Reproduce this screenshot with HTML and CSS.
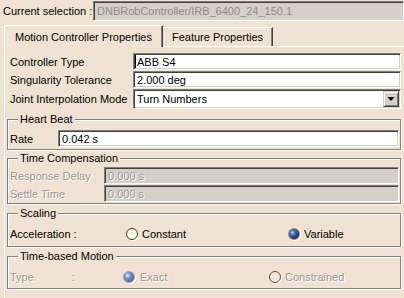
FILE: index.html
```html
<!DOCTYPE html>
<html lang="en">
<head>
	<meta charset="UTF-8">
	<title>Controller Properties</title>
	<link rel="stylesheet" href="styles.css">
</head>
<body>
	<div class="selection">
		<span class="selection-label">Current selection :</span>
		<div class="field field-readonly">DNBRobController/IRB_6400_24_150.1</div>
	</div>

	<div class="tabs">
		<div class="tab tab-active">Motion Controller Properties</div>
		<div class="tab tab-feature">Feature Properties</div>
	</div>

	<div class="panel">
		<div class="prop-row">
			<span class="prop-label">Controller Type</span>
			<div class="field"><span class="caret"></span>ABB S4</div>
		</div>
		<div class="prop-row">
			<span class="prop-label">Singularity Tolerance</span>
			<div class="field">2.000 deg</div>
		</div>
		<div class="prop-row prop-row-select">
			<span class="prop-label">Joint Interpolation Mode</span>
			<div class="field field-select">
				<span>Turn Numbers</span>
				<span class="drop-btn"><span class="arrow"></span></span>
			</div>
		</div>

		<!-- Heart Beat -->
		<div class="group group-heart">
			<div class="group-title">Heart Beat</div>
			<div class="field-row">
				<span class="rate-label">Rate</span>
				<div class="field">0.042 s</div>
			</div>
		</div>

		<!-- Time Compensation -->
		<div class="group group-time">
			<div class="group-title">Time Compensation</div>
			<div class="field-row field-row-first">
				<span class="comp-label is-muted">Response Delay</span>
				<div class="field field-disabled">0.000 s</div>
			</div>
			<div class="field-row field-row-next">
				<span class="comp-label is-muted">Settle Time</span>
				<div class="field field-disabled">0.000 s</div>
			</div>
		</div>

		<!-- Scaling -->
		<div class="group group-scaling">
			<div class="group-title">Scaling</div>
			<div class="radio-row">
				<span class="accel-label">Acceleration :</span>
				<span class="option option-constant"><span class="radio radio-off"></span>Constant</span>
				<span class="option"><span class="radio radio-on"></span>Variable</span>
			</div>
		</div>

		<!-- Time-based Motion -->
		<div class="group group-motion">
			<div class="group-title">Time-based Motion</div>
			<div class="radio-row">
				<span class="type-label is-muted">Type</span>
				<span class="type-colon is-muted">:</span>
				<span class="option option-exact is-muted"><span class="radio radio-on is-disabled"></span>Exact</span>
				<span class="option is-muted"><span class="radio radio-off is-disabled"></span>Constrained</span>
			</div>
		</div>
	</div>
</body>
</html>
```

FILE: styles.css
```css
*{
	box-sizing: border-box;
}
html, body{
	margin: 0;
}
body{
	width: 404px;
	height: 298px;
	overflow: hidden;
	background: #efe2d3;
	font: 11px "Liberation Sans", Arial, sans-serif;
	color: #000;
}

/* top line */
.selection{
	display: flex;
	align-items: center;
	padding: 1px 0 0 3px;
}
.selection-label{
	width: 90px;
	flex-shrink: 0;
}
.selection .field{
	width: 320px;
	height: 20px;
	flex-shrink: 0;
}

/* sunken text box */
.field{
	flex: 1;
	height: 100%;
	display: flex;
	align-items: center;
	padding-left: 3px;
	background: #fff;
	border: 1px solid;
	border-color: #808080 #fff #fff #808080;
	box-shadow: inset 1px 1px #404040, inset -1px -1px #d4d0c8;
	white-space: nowrap;
	overflow: hidden;
}
.field-readonly{
	background: #d4d0c8;
	color: #8c8c8c;
}
.field-disabled{
	background: #d4d0c8;
	color: #9a9a9a;
	text-shadow: 1px 1px 0 #fff;
}
.caret{
	width: 1px;
	height: 13px;
	margin: 0 1px 0 -2px;
	background: #000;
}

/* tabs */
.tabs{
	display: flex;
	align-items: flex-end;
	height: 21px;
	margin-top: 4px;
	padding-left: 4px;
}
.tab{
	height: 19px;
	display: flex;
	align-items: center;
	justify-content: center;
	border-top: 1px solid #fff;
	border-right: 1px solid #404040;
	box-shadow: inset -1px 0 #808080;
}
.tab-active{
	width: 159px;
	height: 22px;
	margin-bottom: -1px;
	position: relative;
	z-index: 1;
	border-left: 1px solid #fff;
	background: #efe2d3;
}
.tab-feature{
	width: 110px;
}

/* tab page */
.panel{
	width: 404px;
	height: 260px;
	margin-left: 4px;
	border-top: 1px solid #fff;
	border-left: 1px solid #fff;
	padding: 6px 7px 0 2px;
}
.prop-row{
	display: flex;
	align-items: center;
	height: 17px;
	margin-bottom: 1px;
	padding-left: 3px;
}
.prop-label{
	width: 123px;
	flex-shrink: 0;
}
.prop-row-select{
	height: 20px;
}
.field-select{
	padding-right: 1px;
}
.drop-btn{
	width: 16px;
	height: 16px;
	margin-left: auto;
	display: flex;
	align-items: center;
	justify-content: center;
	background: #d4d0c8;
	border: 1px solid;
	border-color: #d4d0c8 #404040 #404040 #d4d0c8;
	box-shadow: inset 1px 1px #fff, inset -1px -1px #808080;
}
.arrow{
	width: 7px;
	height: 4px;
	background: #000;
	clip-path: polygon(0 0, 100% 0, 50% 100%);
}

/* etched groups */
.group{
	margin-top: 9px;
	padding: 0 1px 2px 0;
	border: 1px solid #808080;
	box-shadow: inset 1px 1px #fff, 1px 1px #fff;
}
.group-heart{
	margin-top: 10px;
}
.group-time{
	margin-top: 8px;
	padding-bottom: 1px;
}
.group-scaling{
	padding-bottom: 3px;
}
.group-title{
	width: fit-content;
	margin: -7px 0 0 10px;
	padding: 0 2px;
	line-height: 13px;
	background: #efe2d3;
}
.field-row{
	display: flex;
	align-items: center;
	height: 17px;
	margin-top: 4px;
	padding-left: 2px;
}
.field-row-first{
	margin-top: 2px;
}
.field-row-next{
	margin-top: 1px;
}
.rate-label{
	width: 48px;
	flex-shrink: 0;
}
.comp-label{
	width: 94px;
	flex-shrink: 0;
}
.is-muted{
	color: #9b978f;
	text-shadow: 1px 1px 0 #fff;
}

/* radio rows */
.radio-row{
	display: flex;
	align-items: center;
	height: 19px;
	margin-top: 4px;
	padding-left: 2px;
}
.accel-label{
	width: 116px;
}
.type-label{
	width: 62px;
}
.type-colon{
	width: 51px;
}
.option{
	display: flex;
	align-items: center;
	gap: 4px;
}
.option-constant{
	width: 162px;
}
.option-exact{
	width: 146px;
	gap: 5px;
}
.radio{
	width: 12px;
	height: 12px;
	flex-shrink: 0;
	border-radius: 50%;
	border: 1px solid #303030;
	box-shadow: 1px 1px 0 #fff;
}
.radio-off{
	background: #fffbe6;
}
.radio-on{
	border-color: #a8884c;
	background: radial-gradient(circle at 35% 35%, #b8c8f0 0, #3b64c0 30%, #12307a 70%, #0a1f55 100%);
}
.radio-on.is-disabled{
	border-color: #b09a7a;
	background: radial-gradient(circle at 35% 35%, #e4ecfa 0, #7090d0 35%, #4060a8 80%);
}
.radio-off.is-disabled{
	border-color: #505050;
	background: #f3e8d8;
}
```
